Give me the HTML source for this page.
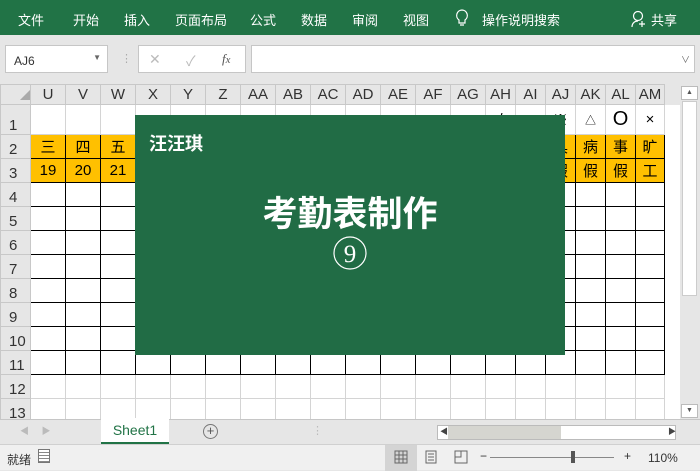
<!DOCTYPE html>
<html><head><meta charset="utf-8"><style>
*{margin:0;padding:0;box-sizing:border-box}
body{width:700px;height:470px;overflow:hidden;background:#e6e6e6;font-family:"Liberation Sans","Noto Sans CJK SC",sans-serif;position:relative}
.abs{position:absolute}
#rib{left:0;top:0;width:700px;height:35px;background:#217346;color:#fff;font-size:13px}
#rib span{position:absolute;top:10px}
table{border-collapse:collapse;table-layout:fixed;position:absolute;left:0;top:84px}
td{border:1px solid #d4d4d4;font-size:15px;text-align:center;padding:0;overflow:hidden;white-space:nowrap;color:#000;background:#fff}
td.h{background:#e6e6e6;border-color:#c8c8c8;color:#333;font-size:15px}
td.r{background:#e6e6e6;border-color:#c8c8c8;color:#333;text-align:left;padding-left:8px;vertical-align:bottom;font-size:15px}
td.b{border:1px solid #000}
td.y{background:#ffc000;border:1px solid #000}
</style></head><body>
<div id="rib" class="abs">
<span style="left:18px">文件</span><span style="left:73px">开始</span><span style="left:124px">插入</span><span style="left:175px">页面布局</span><span style="left:250px">公式</span><span style="left:301px">数据</span><span style="left:352px">审阅</span><span style="left:403px">视图</span>
<svg class="abs" style="left:455px;top:9px" width="14" height="19" viewBox="0 0 14 19"><path d="M7 1a5.5 5.5 0 0 0-3 10v3h6v-3a5.5 5.5 0 0 0-3-10zM5 16h4" fill="none" stroke="#fff" stroke-width="1.2"/></svg>
<span style="left:482px">操作说明搜索</span>
<svg class="abs" style="left:631px;top:10px" width="16" height="18" viewBox="0 0 16 18"><circle cx="7" cy="6" r="4.5" fill="none" stroke="#fff" stroke-width="1.2"/><path d="M1 17c0-4 3-6 6-6M11 11v6M8 14h6" fill="none" stroke="#fff" stroke-width="1.2"/></svg>
<span style="left:651px">共享</span>
</div>
<div class="abs" style="left:5px;top:45px;width:103px;height:28px;background:#fff;border:1px solid #c6c6c6;font-size:12px;padding:8px 0 0 8px;color:#333">AJ6<span style="position:absolute;right:6px;top:7px;font-size:8px;color:#666">▼</span></div>
<div class="abs" style="left:121px;top:52px;color:#aaa;font-size:11px">⋮</div>
<div class="abs" style="left:138px;top:45px;width:108px;height:28px;background:#fff;border:1px solid #c6c6c6;color:#bbb;font-size:14px"><span class="abs" style="left:10px;top:5px">✕</span><span class="abs" style="left:47px;top:5px">✓</span><span class="abs" style="left:83px;top:5px;color:#555;font-style:italic;font-family:'Liberation Serif',serif;font-size:13px">f<small>x</small></span></div>
<div class="abs" style="left:251px;top:45px;width:444px;height:28px;background:#fff;border:1px solid #c6c6c6"><span class="abs" style="right:4px;top:7px;font-size:9px;color:#666">∨</span></div>
<table>
<colgroup><col style="width:30px"><col style="width:35px"><col style="width:35px"><col style="width:35px"><col style="width:35px"><col style="width:35px"><col style="width:35px"><col style="width:35px"><col style="width:35px"><col style="width:35px"><col style="width:35px"><col style="width:35px"><col style="width:35px"><col style="width:35px"><col style="width:30px"><col style="width:30px"><col style="width:30px"><col style="width:30px"><col style="width:30px"><col style="width:29px"><col style="width:16px"></colgroup>
<tr style="height:20px"><td class="h" style="font-size:10px;color:#aaa;text-align:right">◢</td><td class="h">U</td><td class="h">V</td><td class="h">W</td><td class="h">X</td><td class="h">Y</td><td class="h">Z</td><td class="h">AA</td><td class="h">AB</td><td class="h">AC</td><td class="h">AD</td><td class="h">AE</td><td class="h">AF</td><td class="h">AG</td><td class="h">AH</td><td class="h">AI</td><td class="h">AJ</td><td class="h">AK</td><td class="h">AL</td><td class="h">AM</td><td class="h" style="border:none"></td></tr>
<tr style="height:30px"><td class="r">1</td><td></td><td></td><td></td><td></td><td></td><td></td><td></td><td></td><td></td><td></td><td></td><td></td><td></td><td>/</td><td>·</td><td>※</td><td style="font-size:11px">△</td><td style="font-size:20px">O</td><td>×</td><td style="border:none;background:#fff"></td></tr>
<tr style="height:24px"><td class="r">2</td><td class="y">三</td><td class="y">四</td><td class="y">五</td><td class="y"></td><td class="y"></td><td class="y"></td><td class="y"></td><td class="y"></td><td class="y"></td><td class="y"></td><td class="y"></td><td class="y"></td><td class="y"></td><td class="y"></td><td class="y"></td><td class="y">具</td><td class="y">病</td><td class="y">事</td><td class="y">旷</td><td style="border:none;background:#fff"></td></tr>
<tr style="height:24px"><td class="r">3</td><td class="y">19</td><td class="y">20</td><td class="y">21</td><td class="y"></td><td class="y"></td><td class="y"></td><td class="y"></td><td class="y"></td><td class="y"></td><td class="y"></td><td class="y"></td><td class="y"></td><td class="y"></td><td class="y"></td><td class="y"></td><td class="y">假</td><td class="y">假</td><td class="y">假</td><td class="y">工</td><td style="border:none;background:#fff"></td></tr>
<tr style="height:24px"><td class="r">4</td><td class="b"></td><td class="b"></td><td class="b"></td><td class="b"></td><td class="b"></td><td class="b"></td><td class="b"></td><td class="b"></td><td class="b"></td><td class="b"></td><td class="b"></td><td class="b"></td><td class="b"></td><td class="b"></td><td class="b"></td><td class="b"></td><td class="b"></td><td class="b"></td><td class="b"></td><td style="border:none;background:#fff"></td></tr>
<tr style="height:24px"><td class="r">5</td><td class="b"></td><td class="b"></td><td class="b"></td><td class="b"></td><td class="b"></td><td class="b"></td><td class="b"></td><td class="b"></td><td class="b"></td><td class="b"></td><td class="b"></td><td class="b"></td><td class="b"></td><td class="b"></td><td class="b"></td><td class="b"></td><td class="b"></td><td class="b"></td><td class="b"></td><td style="border:none;background:#fff"></td></tr>
<tr style="height:24px"><td class="r">6</td><td class="b"></td><td class="b"></td><td class="b"></td><td class="b"></td><td class="b"></td><td class="b"></td><td class="b"></td><td class="b"></td><td class="b"></td><td class="b"></td><td class="b"></td><td class="b"></td><td class="b"></td><td class="b"></td><td class="b"></td><td class="b"></td><td class="b"></td><td class="b"></td><td class="b"></td><td style="border:none;background:#fff"></td></tr>
<tr style="height:24px"><td class="r">7</td><td class="b"></td><td class="b"></td><td class="b"></td><td class="b"></td><td class="b"></td><td class="b"></td><td class="b"></td><td class="b"></td><td class="b"></td><td class="b"></td><td class="b"></td><td class="b"></td><td class="b"></td><td class="b"></td><td class="b"></td><td class="b"></td><td class="b"></td><td class="b"></td><td class="b"></td><td style="border:none;background:#fff"></td></tr>
<tr style="height:24px"><td class="r">8</td><td class="b"></td><td class="b"></td><td class="b"></td><td class="b"></td><td class="b"></td><td class="b"></td><td class="b"></td><td class="b"></td><td class="b"></td><td class="b"></td><td class="b"></td><td class="b"></td><td class="b"></td><td class="b"></td><td class="b"></td><td class="b"></td><td class="b"></td><td class="b"></td><td class="b"></td><td style="border:none;background:#fff"></td></tr>
<tr style="height:24px"><td class="r">9</td><td class="b"></td><td class="b"></td><td class="b"></td><td class="b"></td><td class="b"></td><td class="b"></td><td class="b"></td><td class="b"></td><td class="b"></td><td class="b"></td><td class="b"></td><td class="b"></td><td class="b"></td><td class="b"></td><td class="b"></td><td class="b"></td><td class="b"></td><td class="b"></td><td class="b"></td><td style="border:none;background:#fff"></td></tr>
<tr style="height:24px"><td class="r">10</td><td class="b"></td><td class="b"></td><td class="b"></td><td class="b"></td><td class="b"></td><td class="b"></td><td class="b"></td><td class="b"></td><td class="b"></td><td class="b"></td><td class="b"></td><td class="b"></td><td class="b"></td><td class="b"></td><td class="b"></td><td class="b"></td><td class="b"></td><td class="b"></td><td class="b"></td><td style="border:none;background:#fff"></td></tr>
<tr style="height:24px"><td class="r">11</td><td class="b"></td><td class="b"></td><td class="b"></td><td class="b"></td><td class="b"></td><td class="b"></td><td class="b"></td><td class="b"></td><td class="b"></td><td class="b"></td><td class="b"></td><td class="b"></td><td class="b"></td><td class="b"></td><td class="b"></td><td class="b"></td><td class="b"></td><td class="b"></td><td class="b"></td><td style="border:none;background:#fff"></td></tr>
<tr style="height:24px"><td class="r">12</td><td></td><td></td><td></td><td></td><td></td><td></td><td></td><td></td><td></td><td></td><td></td><td></td><td></td><td></td><td></td><td></td><td></td><td></td><td></td><td style="border:none;background:#fff"></td></tr>
<tr style="height:24px"><td class="r">13</td><td></td><td></td><td></td><td></td><td></td><td></td><td></td><td></td><td></td><td></td><td></td><td></td><td></td><td></td><td></td><td></td><td></td><td></td><td></td><td style="border:none;background:#fff"></td></tr>
</table>
<div class="abs" style="left:680px;top:84px;width:20px;height:336px;background:#e6e6e6"></div>
<div class="abs" style="left:681px;top:86px;width:17px;height:14px;background:#fff;border:1px solid #bbb;font-size:7px;text-align:center;color:#555;line-height:12px">▲</div>
<div class="abs" style="left:682px;top:101px;width:15px;height:195px;background:#fff;border:1px solid #ccc"></div>
<div class="abs" style="left:681px;top:404px;width:17px;height:14px;background:#fff;border:1px solid #bbb;font-size:7px;text-align:center;color:#555;line-height:12px">▼</div>
<div class="abs" style="left:135px;top:115px;width:430px;height:240px;background:#216c45;color:#fff">
<div class="abs" style="left:14px;top:15px;font-size:18px;font-weight:bold">汪汪琪</div>
<div class="abs" style="left:0;width:430px;top:80px;text-align:center;font-size:35px;font-weight:bold;line-height:40px">考勤表制作</div>
<svg class="abs" style="left:197px;top:120px" width="36" height="36" viewBox="0 0 36 36"><circle cx="18" cy="18" r="16" fill="none" stroke="#fff" stroke-width="1.2"/><text x="18" y="27" text-anchor="middle" fill="#fff" font-family="Liberation Serif, serif" font-size="25">9</text></svg>
</div>
<div class="abs" style="left:0;top:419px;width:700px;height:25px;background:#e6e6e6;border-top:1px solid #c6c6c6"></div>
<div class="abs" style="left:20px;top:424px;font-size:9px;color:#bbb">◀&nbsp;&nbsp;&nbsp;&nbsp;&nbsp;▶</div>
<div class="abs" style="left:101px;top:418px;width:68px;height:26px;background:#fff;border-bottom:2px solid #217346;color:#217346;font-size:14px;text-align:center;line-height:24px">Sheet1</div>
<div class="abs" style="left:203px;top:424px;width:15px;height:15px;border:1px solid #777;border-radius:50%;font-size:13px;line-height:12px;text-align:center;color:#555">+</div>
<div class="abs" style="left:312px;top:424px;color:#bbb;font-size:11px">⋮</div>
<div class="abs" style="left:437px;top:425px;width:239px;height:15px;background:#fff;border:1px solid #bbb"></div>
<div class="abs" style="left:448px;top:426px;width:113px;height:13px;background:#d5d5d0"></div>
<div class="abs" style="left:440px;top:426px;font-size:8px;color:#444">◀</div>
<div class="abs" style="left:668px;top:426px;font-size:8px;color:#444">▶</div>
<div class="abs" style="left:0;top:444px;width:700px;height:26px;background:#f0f0f0;border-top:1px solid #d0d0d0;font-size:12px;color:#333">
<span class="abs" style="left:7px;top:6px">就绪</span>
<span class="abs" style="left:38px;top:4px;width:12px;height:14px;border:1px solid #777;background:repeating-linear-gradient(#fff 0 2px,#888 2px 3px)"></span>
<span class="abs" style="left:385px;top:0;width:32px;height:26px;background:#d4d4d4"></span>
<svg class="abs" style="left:394px;top:5px" width="14" height="14"><path d="M1 1h12v12H1zM1 5h12M1 9h12M5 1v12M9 1v12" fill="none" stroke="#666"/></svg>
<svg class="abs" style="left:424px;top:5px" width="14" height="14"><path d="M2 1h10v12H2zM4 4h6M4 7h6M4 10h6" fill="none" stroke="#666"/></svg>
<svg class="abs" style="left:454px;top:5px" width="14" height="14"><path d="M1 1h12v12H1zM7 1v6H1" fill="none" stroke="#666"/></svg>
<span class="abs" style="left:480px;top:4px">−</span>
<span class="abs" style="left:490px;top:12px;width:124px;height:1px;background:#888"></span>
<span class="abs" style="left:571px;top:6px;width:4px;height:12px;background:#555"></span>
<span class="abs" style="left:624px;top:4px">+</span>
<span class="abs" style="left:648px;top:6px">110%</span>
</div>
</body></html>
